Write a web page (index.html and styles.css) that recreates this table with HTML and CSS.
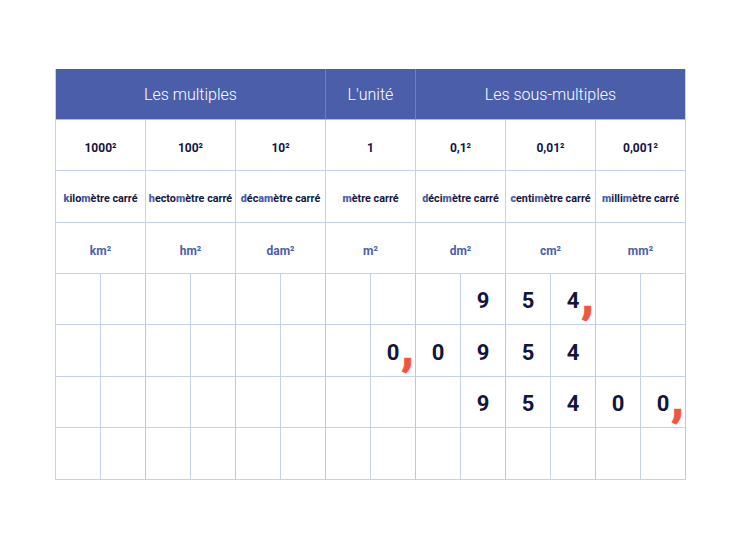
FILE: index.html
```html
<!DOCTYPE html>
<html lang="fr">
<head>
<meta charset="utf-8">
<title>Tableau de conversion des unités d'aire</title>
<link rel="stylesheet" href="styles.css">
</head>
<body>
<div class="table">
  <div class="head span6">Les multiples</div>
  <div class="head span2">L'unité</div>
  <div class="head span6 last">Les sous-multiples</div>

  <div class="cell span2 num">1000²</div>
  <div class="cell span2 num">100²</div>
  <div class="cell span2 num">10²</div>
  <div class="cell span2 num">1</div>
  <div class="cell span2 num">0,1²</div>
  <div class="cell span2 num">0,01²</div>
  <div class="cell span2 num">0,001²</div>

  <div class="cell span2 name"><b>k</b>ilo<b>m</b>ètre carré</div>
  <div class="cell span2 name"><b>h</b>ecto<b>m</b>ètre carré</div>
  <div class="cell span2 name"><b>d</b>éc<b>a</b><b>m</b>ètre carré</div>
  <div class="cell span2 name"><b>m</b>ètre carré</div>
  <div class="cell span2 name"><b>d</b>éci<b>m</b>ètre carré</div>
  <div class="cell span2 name"><b>c</b>enti<b>m</b>ètre carré</div>
  <div class="cell span2 name"><b>m</b>illi<b>m</b>ètre carré</div>

  <div class="cell span2 abbr">km²</div>
  <div class="cell span2 abbr">hm²</div>
  <div class="cell span2 abbr">dam²</div>
  <div class="cell span2 abbr">m²</div>
  <div class="cell span2 abbr">dm²</div>
  <div class="cell span2 abbr">cm²</div>
  <div class="cell span2 abbr">mm²</div>

  <!-- row 1 -->
  <div class="cell d"></div><div class="cell d major"></div>
  <div class="cell d"></div><div class="cell d major"></div>
  <div class="cell d"></div><div class="cell d major"></div>
  <div class="cell d"></div><div class="cell d major"></div>
  <div class="cell d"></div><div class="cell d major">9</div>
  <div class="cell d">5</div><div class="cell d major">4<span class="comma">,</span></div>
  <div class="cell d"></div><div class="cell d major"></div>

  <!-- row 2 -->
  <div class="cell d"></div><div class="cell d major"></div>
  <div class="cell d"></div><div class="cell d major"></div>
  <div class="cell d"></div><div class="cell d major"></div>
  <div class="cell d"></div><div class="cell d major">0<span class="comma">,</span></div>
  <div class="cell d">0</div><div class="cell d major">9</div>
  <div class="cell d">5</div><div class="cell d major">4</div>
  <div class="cell d"></div><div class="cell d major"></div>

  <!-- row 3 -->
  <div class="cell d"></div><div class="cell d major"></div>
  <div class="cell d"></div><div class="cell d major"></div>
  <div class="cell d"></div><div class="cell d major"></div>
  <div class="cell d"></div><div class="cell d major"></div>
  <div class="cell d"></div><div class="cell d major">9</div>
  <div class="cell d">5</div><div class="cell d major">4</div>
  <div class="cell d">0</div><div class="cell d major">0<span class="comma">,</span></div>

  <!-- row 4 -->
  <div class="cell d"></div><div class="cell d major"></div>
  <div class="cell d"></div><div class="cell d major"></div>
  <div class="cell d"></div><div class="cell d major"></div>
  <div class="cell d"></div><div class="cell d major"></div>
  <div class="cell d"></div><div class="cell d major"></div>
  <div class="cell d"></div><div class="cell d major"></div>
  <div class="cell d"></div><div class="cell d major"></div>
</div>
</body>
</html>
```
FILE: styles.css
```css
html, body {
  margin: 0;
  padding: 0;
  background: #ffffff;
}
body {
  padding: 69px 0 0 55px;
  font-family: Roboto, "Liberation Sans", sans-serif;
  color: #141640;
}
.table {
  display: grid;
  grid-template-columns: repeat(14, 45px);
  grid-template-rows: 51px 51px 52px 51px 51px 52px 51px 52px;
  width: 630px;
  border-left: 1px solid #c6d1ea;
}
.head {
  background: #4b5ea9;
  color: #ffffff;
  font-weight: 300;
  font-size: 16px;
  display: flex;
  align-items: center;
  justify-content: center;
  box-sizing: border-box;
  border-right: 1px solid #6d7fbd;
  border-bottom: 1px solid #aebbe0;
}
.head.last {
  border-right: 1px solid #c6d1ea;
}
.span6 { grid-column: span 6; }
.span2 { grid-column: span 2; }
.cell {
  box-sizing: border-box;
  border-right: 1px solid #c6d1ea;
  border-bottom: 1px solid #c6d1ea;
  display: flex;
  align-items: center;
  justify-content: center;
}
.num {
  font-size: 12px;
  font-weight: 700;
  padding-top: 5px;
}
.name {
  font-size: 10.8px;
  font-weight: 700;
  white-space: nowrap;
  padding-top: 4px;
}
.name b {
  color: #4b5ea9;
}
.abbr {
  font-size: 12px;
  font-weight: 700;
  color: #4b5ea9;
  padding-top: 5px;
}
.d {
  position: relative;
  font-size: 22px;
  font-weight: 700;
  color: #121540;
  padding-top: 3px;
}
.d.major {
  border-right-color: #bdc8e2;
}
.comma {
  position: absolute;
  right: 1px;
  bottom: 4px;
  font-size: 48px;
  line-height: 1;
  font-weight: 900;
  color: #f2553f;
  -webkit-text-stroke: 0.6px #f2553f;
}
```
